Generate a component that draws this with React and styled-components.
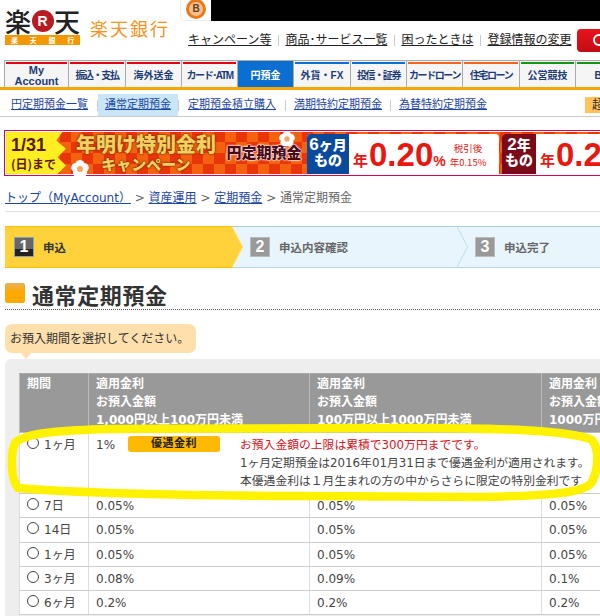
import React from 'react';
import styled, { createGlobalStyle } from 'styled-components';

const GlobalStyle = createGlobalStyle`
  html, body { margin: 0; padding: 0; background: #fff; }
  body { font-family: "DejaVu Sans", "Noto Sans CJK JP", sans-serif; font-size: 12px; color: #333; overflow: hidden; }
`

const Page = styled.div`
  position: relative;
  width: 600px;
  height: 616px;
  overflow: hidden;
`

/* header */
const Header = styled.div`
  display: flex;
  height: 60px;
  padding-left: 5px;
`
const LogoBox = styled.div`
  width: 75px;
  margin-top: 7px;
  flex: none;
`
const LogoTop = styled.div`
  display: flex;
  align-items: center;
  justify-content: space-between;
  height: 28px;
  font-family: "Noto Sans CJK JP", sans-serif;
  font-size: 26px;
  line-height: 28px;
  font-weight: 500;
  color: #222;
`
const LogoR = styled.span`
  width: 22px;
  height: 22px;
  border-radius: 50%;
  background: #b81c22;
  color: #fff;
  font: 700 14px/22px "Liberation Sans", sans-serif;
  text-align: center;
`
const LogoBand = styled.div`
  display: flex;
  justify-content: space-around;
  height: 10px;
  margin-top: 0;
  background: #f39800;
  color: #fff;
  font-family: "Noto Sans CJK JP", sans-serif;
  font-size: 7px;
  line-height: 10px;
  font-weight: 700;
`
const BankName = styled.div`
  width: 90px;
  margin: 17px 0 0 10px;
  flex: none;
  font-family: "Noto Sans CJK JP", sans-serif;
  font-size: 18px;
  line-height: 22px;
  letter-spacing: 2px;
  color: #f7931e;
  white-space: nowrap;
`
const HeaderRight = styled.div`
  flex: 1;
  min-width: 0;
`
const TopStrip = styled.div`
  display: flex;
  height: 21px;
`
const BadgeTab = styled.div`
  width: 31px;
  flex: none;
  display: flex;
  justify-content: center;
  align-items: flex-start;
  overflow: hidden;
  border-left: 1px solid #eee;
  border-bottom: 1px solid #eee;
  border-bottom-left-radius: 5px;
  box-sizing: border-box;
`
const Badge = styled.div`
  width: 14px;
  height: 14px;
  margin-top: -1px;
  border: 3px solid #e87a1d;
  border-radius: 50%;
  background: #f5c090;
  color: #6a4020;
  font: 700 10px/14px "Liberation Sans", sans-serif;
  text-align: center;
`
const BlackBar = styled.div`
  flex: 1;
  background: #000;
`
const TopLinks = styled.div`
  display: flex;
  align-items: center;
  margin-top: 9px;
  padding-left: 8px;
  height: 20px;
`
const TopLink = styled.a`
  font-size: 12px;
  line-height: 18px;
  color: #222;
  text-decoration: underline;
  white-space: nowrap;
`
const TopSep = styled.span`
  width: 1px;
  height: 11px;
  margin: 0 6.5px;
  background: #ccc;
  flex: none;
`
const RedButton = styled.div`
  width: 40px;
  height: 23px;
  margin-left: 6px;
  flex: none;
  border-radius: 4px 0 0 4px;
  background: linear-gradient(#e8141c, #c00d12);
  display: flex;
  align-items: center;
  padding-left: 16px;
  &::after {
    content: "";
    width: 8px;
    height: 8px;
    border: 2px solid #fff;
    border-radius: 50%;
  }
`

/* main nav */
const Nav = styled.div`
  display: flex;
  height: 27px;
  padding-left: 4px;
  border-bottom: 3px solid #f7a600;
`
const NavTab = styled.div`
  width: ${p => p.$w}px;
  flex: none;
  box-sizing: border-box;
  border-top: 1px solid #aaa;
  border-right: 1px solid #aaa;
  border-left: ${p => p.$first ? '1px solid #aaa' : 'none'};
  background: ${p => p.$active ? '#0a6fd0' : '#f5f5f5'};
  color: ${p => p.$active ? '#fff' : '#1d3c78'};
  font-family: "Liberation Sans", "Noto Sans CJK JP", sans-serif;
  font-size: ${p => p.$first ? '11px' : '10px'};
  font-weight: 700;
  line-height: 11px;
  letter-spacing: ${p => p.$tight ? '-1.4px' : '0'};
  text-align: center;
  white-space: nowrap;
  display: flex;
  align-items: center;
  justify-content: center;
  padding-top: 3px;
  position: relative;
  &::before {
    content: "";
    position: absolute;
    top: 1px;
    left: 1px;
    right: 1px;
    height: 2px;
    background: ${p => p.$bar};
  }
`

/* sub nav */
const SubNav = styled.div`
  display: flex;
  align-items: flex-end;
  height: 26px;
  padding-left: 2px;
  border-bottom: 1px solid #ccc;
`
const SubItem = styled.a`
  height: 22px;
  padding: 0 ${p => p.$pad}px;
  background: ${p => p.$current ? '#c8e6f7' : 'transparent'};
  color: #1d45a8;
  font-size: 11px;
  line-height: 22px;
  text-decoration: underline;
  white-space: nowrap;
  flex: none;
`
const SubSep = styled.span`
  width: 1px;
  height: 11px;
  margin-bottom: 5px;
  background: #ccc;
  flex: none;
`
const SubNote = styled.div`
  width: 30px;
  height: 16px;
  margin: 0 0 3px 90px;
  padding-left: 7px;
  background: #ffc35a;
  color: #333;
  font-size: 12px;
  line-height: 16px;
  flex: none;
  white-space: nowrap;
  overflow: hidden;
`

/* campaign banner */
const Banner = styled.div`
  position: relative;
  display: flex;
  align-items: stretch;
  width: 620px;
  height: 42px;
  margin: 13px 0 0 4px;
  border-top: 1px solid #e0004f;
  border-bottom: 1px solid #e0004f;
  border-left: 1px solid #e0004f;
  padding: 1px 0 1px 1px;
  background-color: #fff;
  background-image: repeating-conic-gradient(#e8360a 0 25%, #f5620f 0 50%);
  background-size: 22px 22px;
  background-clip: content-box;
`
const BannerDate = styled.div`
  width: 60px;
  flex: none;
  background: #ffee22;
  clip-path: polygon(0 0, 94% 0, 84% 20%, 100% 40%, 86% 60%, 100% 80%, 86% 100%, 0 100%);
  color: #5a1a00;
  font-family: "Noto Sans CJK JP", sans-serif;
  font-weight: 700;
  font-size: 12px;
  line-height: 15px;
  padding: 3px 0 0 5px;
  box-sizing: border-box;
  white-space: nowrap;
  & b {
    display: block;
    font: 700 18px/21px "Liberation Sans", sans-serif;
  }
`
const BannerTitle = styled.div`
  width: 160px;
  flex: none;
  box-sizing: border-box;
  text-align: center;
  color: #f2d060;
  font-family: "Noto Sans CJK JP", sans-serif;
  font-weight: 900;
  font-size: 20px;
  line-height: 23px;
  white-space: nowrap;
  text-shadow: 0 0 2px #6a3000, 0 0 2px #6a3000;
  & span {
    display: block;
    font-size: 15px;
    line-height: 17px;
  }
`
const BannerLabel = styled.div`
  flex: none;
  width: 76px;
  color: #4a0a18;
  font-family: "Noto Sans CJK JP", sans-serif;
  font-weight: 900;
  font-size: 15px;
  line-height: 40px;
  white-space: nowrap;
  text-align: center;
  text-shadow: 0 0 2px #fff, 0 0 2px #fff, 0 0 2px #fff;
`
const RateCard = styled.div`
  display: flex;
  flex: none;
  width: ${p => p.$w}px;
  margin: 2px 3px 0 ${p => p.$ml}px;
  background: #fff;
  border-radius: 4px 4px 0 0;
  overflow: hidden;
`
const RateTerm = styled.div`
  width: ${p => p.$w}px;
  flex: none;
  background: ${p => p.$bg};
  color: #fff;
  font-family: "Noto Sans CJK JP", sans-serif;
  font-weight: 900;
  font-size: 14px;
  line-height: 15px;
  text-align: center;
  padding-top: 3px;
  box-sizing: border-box;
  white-space: nowrap;
  & b {
    font: 700 17px/15px "Liberation Sans", sans-serif;
  }
`
const RateMain = styled.div`
  display: flex;
  align-items: baseline;
  padding: 3px 0 0 4px;
  color: #e8170f;
  font-family: "Noto Sans CJK JP", sans-serif;
  font-weight: 700;
  font-size: 15px;
  line-height: 35px;
  white-space: nowrap;
  & b {
    margin-left: 1px;
    font: 700 33px/35px "Liberation Sans", sans-serif;
  }
  & i {
    font: 700 14px "Liberation Sans", sans-serif;
  }
`
const RateTax = styled.div`
  margin: 7px 0 0 4px;
  font-family: "Noto Sans CJK JP", sans-serif;
  font-size: 9.5px;
  line-height: 14px;
  color: #e8170f;
  text-align: center;
  white-space: nowrap;
`
const Plum = styled.svg`
  position: absolute;
  left: ${p => p.$x}px;
  top: ${p => p.$y}px;
  width: ${p => p.$s}px;
  height: ${p => p.$s}px;
`

/* breadcrumb */
const Crumbs = styled.div`
  height: 36px;
  margin-left: 5px;
  padding-top: 11px;
  border-bottom: 1px solid #ddd;
  font-size: 12px;
  line-height: 22px;
  color: #666;
  white-space: nowrap;
  box-sizing: border-box;
  & a {
    color: #1d45a8;
    text-decoration: underline;
  }
`

/* steps */
const Steps = styled.div`
  display: flex;
  height: 42px;
  margin: 14px 0 0 5px;
  width: 720px;
`
const Step = styled.div`
  display: flex;
  align-items: center;
  width: ${p => p.$w}px;
  margin-right: -11px;
  padding-left: ${p => p.$first ? '9px' : '18px'};
  box-sizing: border-box;
  background: ${p => p.$active ? '#ffd23c' : '#e8f5fd'};
  clip-path: polygon(0 0, calc(100% - 11px) 0, 100% 50%, calc(100% - 11px) 100%, 0 100%);
  position: relative;
  z-index: ${p => p.$z};
  border-top: 1px solid ${p => p.$active ? '#ffc000' : '#a8d0e0'};
  border-bottom: 1px solid ${p => p.$active ? '#ffc000' : '#b5d6e6'};
  font-family: "Noto Sans CJK JP", sans-serif;
  font-size: 11.5px;
  font-weight: 700;
  color: ${p => p.$active ? '#333' : '#666'};
`
const StepEdge = styled.svg`
  position: absolute;
  right: 0;
  top: -1px;
  width: 11px;
  height: 42px;
`
const StepNum = styled.span`
  width: 18px;
  height: 18px;
  margin-right: 9px;
  flex: none;
  border: 1px solid ${p => p.$active ? '#8aa0b8' : '#bbb'};
  background: ${p => p.$active ? 'linear-gradient(#666 60%, #222 60%)' : '#999'};
  color: #fff;
  font: 700 16px/18px "Liberation Sans", sans-serif;
  text-align: center;
`

/* heading */
const Heading = styled.div`
  display: flex;
  align-items: flex-end;
  gap: 7px;
  height: 42px;
  margin-left: 5px;
  padding-bottom: 2px;
  border-bottom: 1px dotted #555;
  box-sizing: border-box;
  color: #333;
  font-family: "Noto Sans CJK JP", sans-serif;
  font-size: 22px;
  line-height: 26px;
  font-weight: 700;
  letter-spacing: 0.6px;
`
const HeadingMark = styled.span`
  width: 20px;
  height: 20px;
  border-radius: 2px;
  flex: none;
  margin-bottom: 4px;
  background: linear-gradient(#e8b060, #ffa800 45%);
`

/* bubble */
const Bubble = styled.div`
  position: relative;
  width: 191px;
  height: 29px;
  margin: 14px 0 0 5px;
  padding-left: 5px;
  box-sizing: border-box;
  background: #ffe0ac;
  border-radius: 7px;
  font-family: "Noto Sans CJK JP", sans-serif;
  font-size: 12px;
  line-height: 28px;
  color: #333;
  white-space: nowrap;
  z-index: 1;
  &::after {
    content: "";
    position: absolute;
    left: 15px;
    bottom: -6px;
    width: 0;
    height: 0;
    border-left: 6px solid transparent;
    border-right: 6px solid transparent;
    border-top: 7px solid #ffe0ac;
  }
`

/* table panel */
const Panel = styled.div`
  margin: 6px 0 0 5px;
  height: 257px;
  padding: 14px 0 0 14px;
  background: #eee;
  border-top-left-radius: 6px;
  overflow: hidden;
`
const RateTable = styled.table`
  width: 700px;
  table-layout: fixed;
  border-collapse: collapse;
  background: #fff;
  font-size: 12px;
`
const Th = styled.th`
  height: 59px;
  padding: 1px 7px 0;
  box-sizing: border-box;
  background: #999;
  border: 1px solid #bbb;
  border-top: 1px solid #aaa;
  color: #fff;
  font-weight: 700;
  font-size: 12px;
  line-height: 18px;
  text-align: left;
  vertical-align: top;
  white-space: nowrap;
  overflow: hidden;
`
const Td = styled.td`
  height: ${p => p.$h}px;
  padding: ${p => p.$pad || '0 7px'};
  box-sizing: border-box;
  border: 1px solid #ddd;
  border-bottom-color: #ccc;
  vertical-align: ${p => p.$top ? 'top' : 'middle'};
  color: #444;
  white-space: nowrap;
  line-height: 18px;
`
const TermLabel = styled.label`
  display: flex;
  align-items: center;
  gap: 5px;
`
const Radio = styled.span`
  width: 12px;
  height: 12px;
  box-sizing: border-box;
  border: 1px solid #444;
  border-radius: 50%;
  background: #fff;
  flex: none;
  margin-top: -4px;
`
const OfferRow = styled.div`
  display: flex;
  align-items: flex-start;
  width: 495px;
`
const OfferRate = styled.div`
  width: 32px;
  flex: none;
  line-height: 18px;
`
const OfferBadge = styled.div`
  width: 92px;
  height: 16px;
  flex: none;
  border-radius: 3px;
  background: #ffb900;
  color: #222;
  font-size: 11px;
  font-weight: 700;
  line-height: 16px;
  letter-spacing: 0.5px;
  text-align: center;
`
const OfferNotes = styled.div`
  margin-left: 20px;
  line-height: 18px;
  color: #444;
  font-size: 11.8px;
`
const RedNote = styled.div`
  color: #d8101a;
`

const Scribble = styled.svg`
  position: absolute;
  left: 0;
  top: 0;
  width: 600px;
  height: 616px;
  pointer-events: none;
  z-index: 5;
`

const navTabs = [
  { label: <>My<br />Account</>, w: 65, bar: '#e60012', first: true },
  { label: '振込・支払', w: 57, bar: '#e60012', tight: true },
  { label: '海外送金', w: 56, bar: '#e60012' },
  { label: 'カード･ATM', w: 56, bar: '#e60012', tight: true },
  { label: '円預金', w: 56, bar: '#0a6fd0', active: true },
  { label: '外貨・FX', w: 57, bar: '#0a6fd0' },
  { label: '投信・証券', w: 56, bar: '#0a6fd0', tight: true },
  { label: 'カードローン', w: 56, bar: '#f0641e', tight: true },
  { label: '住宅ローン', w: 57, bar: '#f0641e', tight: true },
  { label: '公営競技', w: 56, bar: '#149614' },
  { label: 'BIG', w: 56, bar: '#149614' }
];

const rows = [
  { term: '7日', r: ['0.05%', '0.05%', '0.05%'], h: 24 },
  { term: '14日', r: ['0.05%', '0.05%', '0.05%'], h: 25 },
  { term: '1ヶ月', r: ['0.05%', '0.05%', '0.05%'], h: 24 },
  { term: '3ヶ月', r: ['0.08%', '0.09%', '0.1%'], h: 24 },
  { term: '6ヶ月', r: ['0.2%', '0.2%', '0.2%'], h: 24 }
];

function PlumFlower({ x, y, s }) {
  return (
    <Plum $x={x} $y={y} $s={s} viewBox="0 0 24 24">
      {[0, 72, 144, 216, 288].map(a => (
        <circle key={a} cx="12" cy="6" r="6" fill="#fff" transform={`rotate(${a} 12 12)`} />
      ))}
      <circle cx="12" cy="12" r="4" fill="#f7a860" />
    </Plum>
  );
}

export default function App() {
  return (
    <Page>
      <GlobalStyle />
      <Header>
        <LogoBox>
          <LogoTop>楽<LogoR>R</LogoR>天</LogoTop>
          <LogoBand><span>楽</span><span>天</span><span>銀</span><span>行</span></LogoBand>
        </LogoBox>
        <BankName>楽天銀行</BankName>
        <HeaderRight>
          <TopStrip>
            <BadgeTab><Badge>B</Badge></BadgeTab>
            <BlackBar />
          </TopStrip>
          <TopLinks>
            <TopLink>キャンペーン等</TopLink>
            <TopSep />
            <TopLink>商品･サービス一覧</TopLink>
            <TopSep />
            <TopLink>困ったときは</TopLink>
            <TopSep />
            <TopLink>登録情報の変更</TopLink>
            <RedButton />
          </TopLinks>
        </HeaderRight>
      </Header>

      <Nav>
        {navTabs.map((t, i) => (
          <NavTab key={i} $w={t.w} $bar={t.bar} $active={t.active} $first={t.first} $tight={t.tight}>
            <span>{t.label}</span>
          </NavTab>
        ))}
      </Nav>

      <SubNav>
        <SubItem $pad={9}>円定期預金一覧</SubItem>
        <SubSep />
        <SubItem $current $pad={7}>通常定期預金</SubItem>
        <SubSep />
        <SubItem $pad={9}>定期預金積立購入</SubItem>
        <SubSep />
        <SubItem $pad={8}>満期特約定期預金</SubItem>
        <SubSep />
        <SubItem $pad={8}>為替特約定期預金</SubItem>
        <SubNote>超</SubNote>
      </SubNav>

      <Banner>
        <BannerDate><b>1/31</b>(日)まで</BannerDate>
        <BannerTitle>年明け特別金利<span>キャンペーン</span></BannerTitle>
        <BannerLabel>円定期預金</BannerLabel>
        <RateCard $w={192} $ml={5}>
          <RateTerm $w={42} $bg="#0a4a9c"><b>6</b>ヶ月<br />もの</RateTerm>
          <RateMain>年<b>0.20</b><i>%</i></RateMain>
          <RateTax>税引後<br />年0.15%</RateTax>
        </RateCard>
        <RateCard $w={200} $ml={0}>
          <RateTerm $w={34} $bg="#7a0a18"><b>2</b>年<br />もの</RateTerm>
          <RateMain>年<b>0.20</b><i>%</i></RateMain>
        </RateCard>
        <PlumFlower x={66} y={29} s={18} />
        <PlumFlower x={274} y={0} s={16} />
      </Banner>

      <Crumbs>
        <a>トップ（MyAccount）</a> &gt; <a>資産運用</a> &gt; <a>定期預金</a> &gt; 通常定期預金
      </Crumbs>

      <Steps>
        <Step $active $first $w={238} $z={3}>
          <StepNum $active>1</StepNum>申込
          <StepEdge viewBox="0 0 11 42"><path d="M0 0 L11 21 L0 42" fill="none" stroke="#ffe680" strokeWidth="1.5" /></StepEdge>
        </Step>
        <Step $w={236} $z={2}>
          <StepNum>2</StepNum>申込内容確認
          <StepEdge viewBox="0 0 11 42"><path d="M0 0 L11 21 L0 42" fill="none" stroke="#b5d6e6" strokeWidth="1.5" /></StepEdge>
        </Step>
        <Step $w={238} $z={1}>
          <StepNum>3</StepNum>申込完了
        </Step>
      </Steps>

      <Heading><HeadingMark />通常定期預金</Heading>

      <Bubble>お預入期間を選択してください。</Bubble>

      <Panel>
        <RateTable>
          <colgroup>
            <col style={{ width: 69 }} />
            <col style={{ width: 221 }} />
            <col style={{ width: 232 }} />
            <col />
          </colgroup>
          <thead>
            <tr>
              <Th>期間</Th>
              <Th>適用金利<br />お預入金額<br />1,000円以上100万円未満</Th>
              <Th>適用金利<br />お預入金額<br />100万円以上1000万円未満</Th>
              <Th>適用金利<br />お預入金額<br />1000万円以上</Th>
            </tr>
          </thead>
          <tbody>
            <tr>
              <Td $h={61} $top $pad="3px 7px 0"><TermLabel><Radio />1ヶ月</TermLabel></Td>
              <Td colSpan={3} $top $pad="3px 7px 0">
                <OfferRow>
                  <OfferRate>1%</OfferRate>
                  <OfferBadge>優遇金利</OfferBadge>
                  <OfferNotes>
                    <RedNote>お預入金額の上限は累積で300万円までです。</RedNote>
                    <div>1ヶ月定期預金は2016年01月31日まで優遇金利が適用されます。</div>
                    <div>本優遇金利は１月生まれの方の中からさらに限定の特別金利です</div>
                  </OfferNotes>
                </OfferRow>
              </Td>
            </tr>
            {rows.map(row => (
              <tr key={row.term}>
                <Td $h={row.h}><TermLabel><Radio />{row.term}</TermLabel></Td>
                {row.r.map((v, i) => <Td key={i} $h={row.h}>{v}</Td>)}
              </tr>
            ))}
          </tbody>
        </RateTable>
      </Panel>

      <Scribble viewBox="0 0 600 616">
        <path
          d="M110 429 C70 430 25 432 15 443 C10 455 11 480 18 488 C60 492 180 496 300 496 L480 497 C540 496 585 494 592 482 C598 470 600 450 592 440 C570 430 500 428 400 428 Z"
          fill="none"
          stroke="#fff200"
          strokeWidth="8.5"
          strokeLinejoin="round"
        />
      </Scribble>
    </Page>
  );
}
